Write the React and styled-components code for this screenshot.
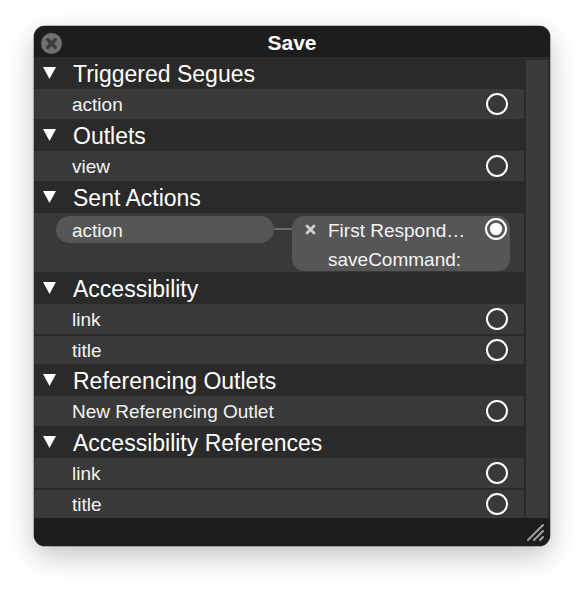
import React from 'react';
import styled, { createGlobalStyle } from 'styled-components';

const GlobalStyle = createGlobalStyle`
    html, body {
        margin: 0;
        padding: 0;
        background: #ffffff;
    }
    body {
        font-family: "Liberation Sans", Arial, sans-serif;
        -webkit-font-smoothing: antialiased;
    }
`;

const sections = [
    { title: 'Triggered Segues', rows: [{ label: 'action' }] },
    { title: 'Outlets', rows: [{ label: 'view' }] },
    { title: 'Sent Actions', connection: { label: 'action', target: 'First Respond…', selector: 'saveCommand:' } },
    { title: 'Accessibility', rows: [{ label: 'link' }, { label: 'title' }] },
    { title: 'Referencing Outlets', rows: [{ label: 'New Referencing Outlet' }] },
    { title: 'Accessibility References', rows: [{ label: 'link' }, { label: 'title' }] },
];

function CloseIcon() {
    return (
        <svg width="21" height="21" viewBox="0 0 21 21">
            <circle cx="10.5" cy="10.5" r="10.5" fill="#707070" />
            <path d="M6.8 6.8 L14.2 14.2 M14.2 6.8 L6.8 14.2" stroke="#3c3c3c" strokeWidth="3.4" strokeLinecap="round" />
        </svg>
    );
}

function Disclosure() {
    return (
        <svg width="13" height="12" viewBox="0 0 13 12">
            <polygon points="0,0 13,0 6.5,12" fill="#ffffff" />
        </svg>
    );
}

function Radio({ filled }) {
    return (
        <svg width="22" height="22" viewBox="0 0 22 22">
            <circle cx="11" cy="11" r="10" fill="none" stroke="#ffffff" strokeWidth="2" />
            {filled && <circle cx="11" cy="11" r="6.2" fill="#ffffff" />}
        </svg>
    );
}

function SmallX() {
    return (
        <svg width="11" height="11" viewBox="0 0 11 11">
            <path d="M2 2 L9 9 M9 2 L2 9" stroke="#d0d0d0" strokeWidth="2.8" strokeLinecap="round" />
        </svg>
    );
}

function Grip() {
    return (
        <svg width="18" height="18" viewBox="0 0 18 18">
            <path d="M2 17 L17 2 M8 17 L17 8 M14 17 L17 14" stroke="#a0a0a0" strokeWidth="2" strokeLinecap="round" />
        </svg>
    );
}

function App() {
    return (
        <>
            <GlobalStyle />
            <Page>
                <Window>
                    <TitleBar>
                        <CloseButton><CloseIcon /></CloseButton>
                        <Title>Save</Title>
                    </TitleBar>
                    <Body>
                        <List>
                            {sections.map((s) => (
                                <Section key={s.title}>
                                    <Header>
                                        <Disclosure />
                                        <span>{s.title}</span>
                                    </Header>
                                    {s.rows && s.rows.map((r) => (
                                        <Row key={r.label}>
                                            <RowLabel>{r.label}</RowLabel>
                                            <Radio />
                                        </Row>
                                    ))}
                                    {s.connection && (
                                        <ConnectionRow>
                                            <Pill>{s.connection.label}</Pill>
                                            <Connector />
                                            <TargetBox>
                                                <TargetIcon><SmallX /></TargetIcon>
                                                <TargetText>
                                                    <span>{s.connection.target}</span>
                                                    <span>{s.connection.selector}</span>
                                                </TargetText>
                                                <Radio filled />
                                            </TargetBox>
                                        </ConnectionRow>
                                    )}
                                </Section>
                            ))}
                        </List>
                        <ScrollTrack />
                    </Body>
                    <BottomBar>
                        <Grip />
                    </BottomBar>
                </Window>
            </Page>
        </>
    );
}

const Page = styled.div`
    width: 584px;
    height: 590px;
    padding: 26px 0 0 34px;
    box-sizing: border-box;
`;

const Window = styled.div`
    width: 516px;
    height: 520px;
    border-radius: 11px;
    overflow: hidden;
    display: flex;
    flex-direction: column;
    background: #2a2a2a;
    box-shadow: 0 10px 28px rgba(0, 0, 0, 0.24), 0 0 0 0.5px rgba(0, 0, 0, 0.5);
`;

const TitleBar = styled.div`
    height: 31px;
    flex: none;
    background: #1d1d1d;
    display: flex;
    align-items: center;
    justify-content: center;
    position: relative;
`;

const CloseButton = styled.div`
    position: absolute;
    left: 7px;
    top: 7px;
    width: 21px;
    height: 21px;
    svg { display: block; }
`;

const Title = styled.div`
    color: #ffffff;
    font-size: 21px;
    font-weight: 700;
    padding-top: 3px;
`;

const Body = styled.div`
    flex: 1;
    display: flex;
    min-height: 0;
`;

const List = styled.div`
    flex: 1;
    display: flex;
    flex-direction: column;
`;

const Section = styled.div`
    display: flex;
    flex-direction: column;
`;

const Header = styled.div`
    height: 32px;
    display: flex;
    align-items: center;
    gap: 17px;
    padding-left: 9px;
    color: #ffffff;
    font-size: 23px;
    span { padding-top: 2px; }
    svg { flex: none; }
`;

const Row = styled.div`
    height: 30px;
    box-sizing: border-box;
    background: #393939;
    display: flex;
    align-items: center;
    justify-content: space-between;
    padding: 0 16px 0 38px;
    & + & {
        margin-top: 2px;
        height: 28px;
    }
    svg { display: block; }
`;

const RowLabel = styled.span`
    color: #f4f4f4;
    font-size: 19px;
    padding-top: 2px;
`;

const ConnectionRow = styled.div`
    height: 59px;
    box-sizing: border-box;
    background: #393939;
    display: flex;
    align-items: flex-start;
    padding: 3px 0 0 22px;
`;

const Pill = styled.div`
    width: 218px;
    height: 27px;
    box-sizing: border-box;
    border-radius: 14px;
    background: #565656;
    color: #f4f4f4;
    font-size: 19px;
    display: flex;
    align-items: center;
    padding: 2px 0 0 16px;
`;

const Connector = styled.div`
    width: 18px;
    height: 2px;
    margin-top: 12px;
    background: #6c6c6c;
`;

const TargetBox = styled.div`
    width: 218px;
    height: 55px;
    box-sizing: border-box;
    border-radius: 12px;
    background: #565656;
    display: flex;
    align-items: flex-start;
    padding: 2px 3px 0 13px;
    svg { display: block; }
`;

const TargetIcon = styled.div`
    width: 23px;
    padding-top: 6px;
    flex: none;
`;

const TargetText = styled.div`
    flex: 1;
    display: flex;
    flex-direction: column;
    color: #f4f4f4;
    font-size: 19px;
    line-height: 29px;
    margin-top: -2px;
    white-space: nowrap;
    overflow: hidden;
`;

const ScrollTrack = styled.div`
    width: 22px;
    flex: none;
    margin: 3px 2px 0 2px;
    background: #3b3b3b;
`;

const BottomBar = styled.div`
    height: 28px;
    flex: none;
    background: #1d1d1d;
    display: flex;
    align-items: center;
    justify-content: flex-end;
    padding-right: 6px;
    svg { display: block; }
`;

export default App;
